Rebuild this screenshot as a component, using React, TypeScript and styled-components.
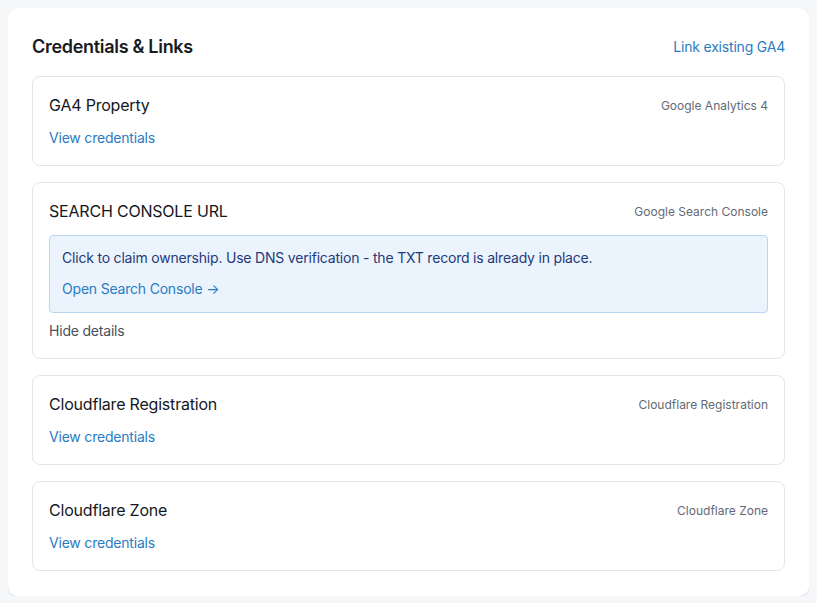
import styled, { createGlobalStyle } from 'styled-components';

const GlobalStyle = createGlobalStyle`
  body {
    margin: 8px;
    background: #f6f7f9;
    font-family: Inter, "Noto Sans", sans-serif;
    -webkit-font-smoothing: antialiased;
  }
  * {
    box-sizing: border-box;
  }
`;

const Panel = styled.section`
  background: #ffffff;
  border-radius: 10px;
  box-shadow: 0 1px 3px rgba(16, 24, 40, 0.12);
  padding: 24px 24px 25px;
`;

const PanelHeader = styled.header`
  display: flex;
  justify-content: space-between;
  align-items: center;
  height: 28px;
  margin-bottom: 16px;
`;

const PanelTitle = styled.h2`
  margin: 0;
  font-size: 18px;
  font-weight: 600;
  letter-spacing: -0.3px;
  color: #181b21;
`;

const Link = styled.a`
  color: #2a7cc2;
  font-size: 14px;
  line-height: 21px;
  letter-spacing: -0.2px;
  text-decoration: none;
  cursor: pointer;
`;

const CardList = styled.div`
  display: flex;
  flex-direction: column;
  gap: 16px;
`;

const Card = styled.div`
  border: 1px solid #e3e5e9;
  border-radius: 8px;
  padding: 16px 16px 17px;
`;

const CardTop = styled.div`
  display: flex;
  justify-content: space-between;
  align-items: center;
  height: 24px;
`;

const CardTitle = styled.h3`
  margin: 0;
  font-size: 16px;
  font-weight: 400;
  letter-spacing: -0.2px;
  color: #15181e;
`;

const Source = styled.span`
  font-size: 12px;
  color: #646a75;
`;

const CardBody = styled.div`
  margin-top: 10px;
  display: flex;
  flex-direction: column;
  align-items: flex-start;
`;

const Notice = styled.div`
  align-self: stretch;
  margin-top: 2px;
  background: #ebf3fd;
  border: 1px solid #b8d5f4;
  border-radius: 4px;
  padding: 12px 12px 13px;
  display: flex;
  flex-direction: column;
  gap: 10px;
`;

const NoticeText = styled.p`
  margin: 0;
  font-size: 14px;
  line-height: 20px;
  letter-spacing: -0.2px;
  color: #1f3a7a;
`;

const Toggle = styled.button`
  margin-top: 8px;
  padding: 0;
  border: none;
  background: none;
  font-family: inherit;
  font-size: 14px;
  line-height: 20px;
  letter-spacing: -0.2px;
  color: #4a515c;
  cursor: pointer;
`;

interface ICredential {
  id: string;
  title: string;
  source: string;
}

const credentials: ICredential[] = [
  { id: 'ga4', title: 'GA4 Property', source: 'Google Analytics 4' },
  { id: 'gsc', title: 'SEARCH CONSOLE URL', source: 'Google Search Console' },
  { id: 'cf-reg', title: 'Cloudflare Registration', source: 'Cloudflare Registration' },
  { id: 'cf-zone', title: 'Cloudflare Zone', source: 'Cloudflare Zone' },
];

function App() {
  return (
    <>
      <GlobalStyle />
      <Panel>
        <PanelHeader>
          <PanelTitle>Credentials &amp; Links</PanelTitle>
          <Link>Link existing GA4</Link>
        </PanelHeader>
        <CardList>
          {credentials.map((c) => (
            <Card key={c.id}>
              <CardTop>
                <CardTitle>{c.title}</CardTitle>
                <Source>{c.source}</Source>
              </CardTop>
              <CardBody>
                {c.id === 'gsc' ? (
                  <>
                    <Notice>
                      <NoticeText>
                        Click to claim ownership. Use DNS verification - the TXT record is already in
                        place.
                      </NoticeText>
                      <Link>Open Search Console &rarr;</Link>
                    </Notice>
                    <Toggle>Hide details</Toggle>
                  </>
                ) : (
                  <Link>View credentials</Link>
                )}
              </CardBody>
            </Card>
          ))}
        </CardList>
      </Panel>
    </>
  );
}

export default App;
